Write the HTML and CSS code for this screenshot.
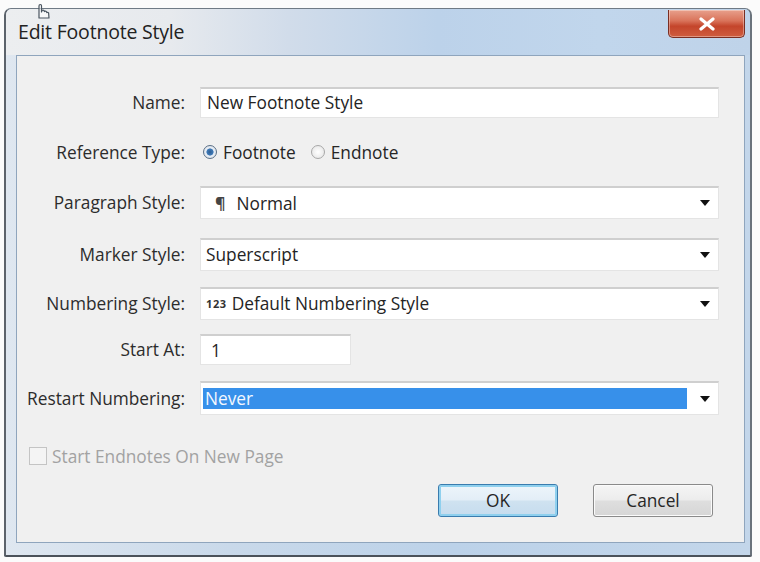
FILE: index.html
```html
<!DOCTYPE html>
<html lang="en">
<head>
<meta charset="utf-8">
<title>Edit Footnote Style</title>
<link rel="stylesheet" href="styles.css">
</head>
<body>
<div class="window">
  <div class="titlebar">
    <span class="title">Edit Footnote Style</span>
    <div class="close" aria-label="Close">
      <svg width="18" height="14" viewBox="0 0 18 14">
        <path d="M3 2 L15 12 M15 2 L3 12" stroke="#ffffff" stroke-width="3.2" stroke-linecap="round"/>
      </svg>
    </div>
  </div>
  <div class="client">
    <div class="form">
      <label class="lbl">Name:</label>
      <div class="field text-field wide">New Footnote Style</div>

      <label class="lbl">Reference Type:</label>
      <div class="radios">
        <span class="radio on"></span><span class="radio-text">Footnote</span>
        <span class="radio"></span><span class="radio-text">Endnote</span>
      </div>

      <label class="lbl">Paragraph Style:</label>
      <div class="field select">
        <span class="value"><span class="pilcrow">¶</span>Normal</span>
        <span class="arrow"></span>
      </div>

      <label class="lbl">Marker Style:</label>
      <div class="field select">
        <span class="value">Superscript</span>
        <span class="arrow"></span>
      </div>

      <label class="lbl">Numbering Style:</label>
      <div class="field select">
        <span class="value"><span class="num-prefix">123</span>Default Numbering Style</span>
        <span class="arrow"></span>
      </div>

      <label class="lbl">Start At:</label>
      <div class="field text-field short">1</div>

      <label class="lbl">Restart Numbering:</label>
      <div class="field select restart">
        <span class="value selected">Never</span>
        <span class="arrow"></span>
      </div>
    </div>

    <div class="check-row">
      <span class="checkbox"></span>
      <span class="check-text">Start Endnotes On New Page</span>
    </div>

    <div class="buttons">
      <div class="btn default">OK</div>
      <div class="btn">Cancel</div>
    </div>
  </div>
</div>

<!-- mouse pointer resting over the title -->
<svg class="pointer" width="16" height="18" viewBox="0 0 16 18">
  <path d="M3 15 L3 3 Q3 1.5 4.3 1.5 Q5.5 1.5 5.5 3 L5.5 9 L6 7.5 Q7 6.6 8 7.5 L8.4 8.6 Q9.4 7.7 10.4 8.6 L10.8 9.6 Q11.8 8.9 12.6 9.8 L13 15 Z" fill="#ffffff" fill-opacity="0.6" stroke="#4a5560" stroke-width="1.2" stroke-linejoin="round"/>
</svg>
</body>
</html>
```

FILE: styles.css
```css
* {
  box-sizing: border-box;
}

html, body {
  margin: 0;
  padding: 0;
  background: #fbfbfb;
}

body {
  position: relative;
  width: 760px;
  height: 562px;
  overflow: hidden;
  font-family: "Open Sans", "Noto Sans", sans-serif;
  color: #262626;
}

/* Aero-style window frame */
.window {
  margin: 8px 0 0 4px;
  width: 748px;
  height: 549px;
  border: 1px solid #6f7a85;
  border-left: 2px solid #5c636b;
  border-right: 2px solid #6a737c;
  border-bottom: 2px solid #4b525a;
  border-radius: 7px 7px 2px 2px;
  background: linear-gradient(90deg, #dfe7f0 0%, #c9d9ea 30%, #bcd2e9 60%, #c3d6ea 100%);
  display: flex;
  flex-direction: column;
}

.titlebar {
  height: 46px;
  display: flex;
  align-items: flex-start;
  background: linear-gradient(90deg, #eceef0 0%, #e7eaee 22%, #d1dcea 38%, #bcd2ea 58%, #c1d6ec 80%, #bfd3e9 100%);
  border-radius: 6px 6px 0 0;
}

.title {
  padding: 10px 0 0 12px;
  font-size: 19.5px;
  line-height: 26px;
  color: #222;
  letter-spacing: -0.2px;
}

.close {
  margin: 1px 5px 0 auto;
  width: 77px;
  height: 28px;
  border: 1px solid #7a2e22;
  border-top: none;
  border-radius: 0 0 5px 5px;
  background: linear-gradient(180deg, #e8a08c 0%, #d9735a 40%, #c4452b 60%, #cf5d3f 100%);
  display: flex;
  align-items: center;
  justify-content: center;
  box-shadow: inset 0 0 0 1px rgba(255, 255, 255, 0.35);
}

/* Cursor floating above the title text */
.pointer {
  position: absolute;
  left: 36px;
  top: 3px;
}

/* Dialog client area */
.client {
  margin: 0 5px 0 10px;
  height: 488px;
  border: 1px solid #8fa5bd;
  background: #f0f0f0;
  display: flex;
  flex-direction: column;
  padding: 21px 25px 0 0;
}

.form {
  display: grid;
  grid-template-columns: 168px 1fr;
  grid-template-rows: 50px 50px 51px 52px 46px 47px 50px;
  column-gap: 15px;
  align-items: center;
}

.lbl {
  text-align: right;
  font-size: 17.3px;
  color: #2c2c2c;
  white-space: nowrap;
}

.field {
  background: #ffffff;
  border: 1px solid #e4e4e4;
  border-top: 2px solid #cfcfcf;
  font-size: 17.3px;
  color: #242424;
  display: flex;
  align-items: center;
}

.text-field {
  height: 31px;
  padding-left: 6px;
}

.text-field.short {
  width: 151px;
  padding-left: 10px;
}

.select {
  height: 33px;
  padding: 0 8px 0 5px;
  justify-content: space-between;
}

.select .value {
  display: flex;
  align-items: center;
}

.pilcrow {
  font-size: 16px;
  margin: 0 11px 0 9px;
  font-weight: 700;
  color: #444;
}

.num-prefix {
  font-size: 11px;
  font-weight: 700;
  letter-spacing: 0.6px;
  margin-right: 5px;
  color: #333;
}

.arrow {
  width: 0;
  height: 0;
  border-left: 5px solid transparent;
  border-right: 5px solid transparent;
  border-top: 6px solid #111;
}

.restart {
  height: 34px;
  padding: 5px 8px 5px 2px;
  align-items: stretch;
}

.restart .arrow {
  align-self: center;
}

.selected {
  flex: 0 0 484px;
  background: #3790ea;
  color: #f4f8ff;
  padding-left: 2px;
}

/* Reference type radios */
.radios {
  display: flex;
  align-items: center;
  font-size: 17.3px;
  color: #262626;
}

.radio {
  width: 14px;
  height: 14px;
  border-radius: 50%;
  border: 1px solid #a8a8a8;
  background: radial-gradient(circle, #ffffff 0%, #e2e2e2 100%);
  margin: 0 6px 0 3px;
}

.radio.on {
  border-color: #5a6f86;
  background: radial-gradient(circle, #2f5e93 0%, #3f7ab8 38%, #e8eef5 46%, #d6dde5 100%);
}

.radio-text {
  margin-right: 12px;
}

/* Disabled checkbox */
.check-row {
  display: flex;
  align-items: center;
  height: 20px;
  margin: 23px 0 0 12px;
}

.checkbox {
  width: 18px;
  height: 18px;
  border: 1px solid #c4c4c4;
  background: #f4f4f4;
  margin-right: 5px;
}

.check-text {
  font-size: 17.3px;
  color: #a2a2a2;
}

/* Dialog buttons */
.buttons {
  display: flex;
  justify-content: flex-end;
  gap: 35px;
  margin-top: 18px;
  padding-right: 6px;
}

.btn {
  width: 120px;
  height: 33px;
  border: 1px solid #8a8a8a;
  border-radius: 3px;
  background: linear-gradient(180deg, #f5f5f5 0%, #ececec 48%, #dedede 52%, #d6d6d6 100%);
  display: flex;
  align-items: center;
  justify-content: center;
  font-size: 17.3px;
  color: #262626;
  box-shadow: inset 0 0 0 1px #fbfbfb;
}

.btn.default {
  border: 1px solid #3a7cae;
  background: linear-gradient(180deg, #edf5fb 0%, #e3eef7 48%, #cfe2f0 52%, #c6dcee 100%);
  box-shadow: inset 0 0 0 2px #8fd0ee;
}
```
